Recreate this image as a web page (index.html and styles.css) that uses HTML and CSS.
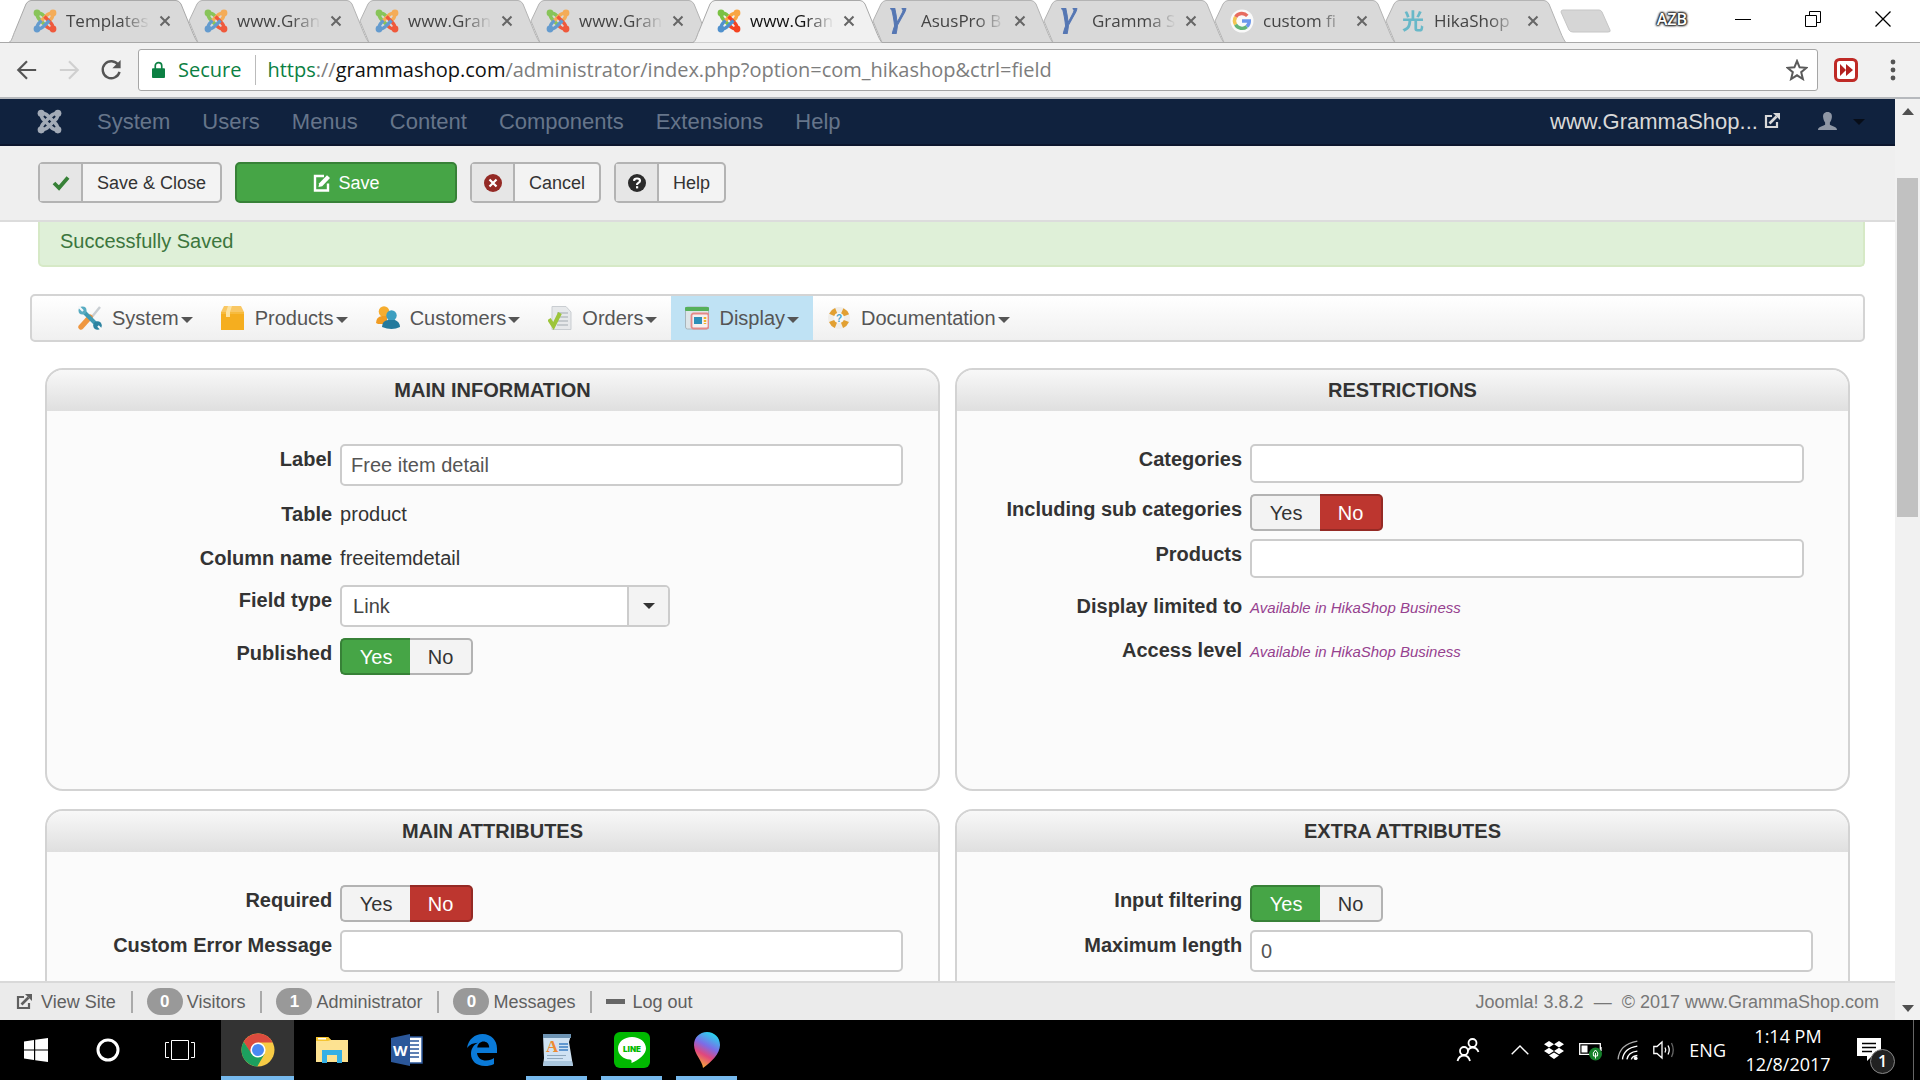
FILE: index.html
```html
<!DOCTYPE html>
<html lang="en">
<head>
  <meta charset="UTF-8">
  <meta name="viewport" content="width=device-width, initial-scale=1.0">
  <title>www.GrammaShop.com - Administration</title>
  <link rel="stylesheet" href="styles.css">
</head>
<body>
  <!-- shared icons -->
  <svg class="defs" aria-hidden="true">
    <defs>
      <symbol id="tab-full" viewBox="0 0 190 43" preserveAspectRatio="none">
        <path d="M0 42.5 C3 41 4 35 6 31 L17 4 Q19 .5 22 .5 H167 Q170 .5 172 4 L183 31 Q187 41 189 42.5" stroke="#a9a9a9"/>
      </symbol>
      <symbol id="tab-cut" viewBox="0 0 190 43" preserveAspectRatio="none">
        <path d="M18 42.5 L9 21 L17 4 Q19 .5 22 .5 H167 Q170 .5 172 4 L183 31 Q187 41 189 42.5" stroke="#b4b4b4"/>
      </symbol>
      <g id="hook">
        <circle cx="4" cy="4" r="3.4" fill="currentColor"/>
        <path d="M4 4 Q4 8.500 7 11 L12.500 16.500 M4 4 Q8.500 4 10.500 6.500 L12.500 8.500" fill="none" stroke="currentColor" stroke-width="3.400"/>
      </g>
      <symbol id="joomla" viewBox="0 0 24 24">
        <use href="#hook" color="#7ac143"/>
        <use href="#hook" color="#f9a541" transform="rotate(90 12 12)"/>
        <use href="#hook" color="#f44321" transform="rotate(180 12 12)"/>
        <use href="#hook" color="#5091cd" transform="rotate(270 12 12)"/>
      </symbol>
      <symbol id="joomla-mono" viewBox="0 0 24 24">
        <use href="#hook"/>
        <use href="#hook" transform="rotate(90 12 12)"/>
        <use href="#hook" transform="rotate(180 12 12)"/>
        <use href="#hook" transform="rotate(270 12 12)"/>
      </symbol>
      <symbol id="gamma" viewBox="0 0 24 24">
        <text x="2" y="17" font-family="Liberation Serif, serif" font-style="italic" font-size="38" fill="#3f66ad" stroke="#3f66ad">γ</text>
      </symbol>
      <symbol id="x" viewBox="0 0 12 12">
        <path d="M1.500 1.500 L10.500 10.500 M10.500 1.500 L1.500 10.500" stroke="currentColor" stroke-width="2"/>
      </symbol>
      <symbol id="external" viewBox="0 0 16 16">
        <path d="M8 3 H2 V14 H13 V9" fill="none" stroke="currentColor" stroke-width="2.200"/>
        <path d="M5.500 10.500 L12.500 3.500" stroke="currentColor" stroke-width="2.600"/>
        <path d="M9 0 H16 V7 Z" fill="currentColor"/>
      </symbol>
      <symbol id="caret" viewBox="0 0 12 6"><path d="M0 0 H12 L6 6 Z" fill="currentColor"/></symbol>
    </defs>
  </svg>

  <div class="browser">
    <div class="tab-strip">
      <div class="tab"><svg class="tab-shape"><use href="#tab-full"/></svg><svg class="favicon"><use href="#joomla"/></svg><span class="tab-title">Templates</span><button class="tab-close" aria-label="Close tab"><svg><use href="#x"/></svg></button></div>
      <div class="tab"><svg class="tab-shape"><use href="#tab-cut"/></svg><svg class="favicon"><use href="#joomla"/></svg><span class="tab-title">www.Gran</span><button class="tab-close" aria-label="Close tab"><svg><use href="#x"/></svg></button></div>
      <div class="tab"><svg class="tab-shape"><use href="#tab-cut"/></svg><svg class="favicon"><use href="#joomla"/></svg><span class="tab-title">www.Gran</span><button class="tab-close" aria-label="Close tab"><svg><use href="#x"/></svg></button></div>
      <div class="tab"><svg class="tab-shape"><use href="#tab-cut"/></svg><svg class="favicon"><use href="#joomla"/></svg><span class="tab-title">www.Gran</span><button class="tab-close" aria-label="Close tab"><svg><use href="#x"/></svg></button></div>
      <div class="tab active"><svg class="tab-shape"><use href="#tab-full"/></svg><svg class="favicon"><use href="#joomla"/></svg><span class="tab-title">www.Gran</span><button class="tab-close" aria-label="Close tab"><svg><use href="#x"/></svg></button></div>
      <div class="tab"><svg class="tab-shape"><use href="#tab-cut"/></svg><svg class="favicon"><use href="#gamma"/></svg><span class="tab-title">AsusPro B</span><button class="tab-close" aria-label="Close tab"><svg><use href="#x"/></svg></button></div>
      <div class="tab"><svg class="tab-shape"><use href="#tab-cut"/></svg><svg class="favicon"><use href="#gamma"/></svg><span class="tab-title">Gramma S</span><button class="tab-close" aria-label="Close tab"><svg><use href="#x"/></svg></button></div>
      <div class="tab">
        <svg class="tab-shape"><use href="#tab-cut"/></svg>
        <svg class="favicon" viewBox="0 0 24 24">
          <circle cx="12" cy="12" r="11.500" fill="#fff"/>
          <g fill="none" stroke-width="3.400">
            <path d="M5.600 8 A7.400 7.400 0 0 1 17.300 6.800" stroke="#ea5a4c"/>
            <path d="M5.600 15.700 A7.400 7.400 0 0 1 5.600 8" stroke="#f7c33c"/>
            <path d="M16.800 17.600 A7.400 7.400 0 0 1 5.600 15.700" stroke="#4fae66"/>
            <path d="M12 12 H19.300 A7.400 7.400 0 0 1 16.800 17.600" stroke="#5a8df0"/>
          </g>
        </svg>
        <span class="tab-title">custom fi</span><button class="tab-close" aria-label="Close tab"><svg><use href="#x"/></svg></button>
      </div>
      <div class="tab">
        <svg class="tab-shape"><use href="#tab-cut"/></svg>
        <svg class="favicon" viewBox="0 0 24 24"><text x="1" y="20" font-family="Noto Sans CJK JP, sans-serif" font-weight="bold" font-size="22" fill="#55b3c6">光</text></svg>
        <span class="tab-title">HikaShop</span><button class="tab-close" aria-label="Close tab"><svg><use href="#x"/></svg></button>
      </div>
      <button class="new-tab" aria-label="New tab"><svg viewBox="0 0 52 26"><path d="M3 2 H39 Q41 2 42 4 L50 22 Q51 24 48 24 H13 Q10 24 9 22 L1 4 Q1 2 3 2 Z" fill="#d6d6d6" stroke="#c6c6c6"/></svg></button>
      <div class="window-controls">
        <span class="profile">AZB</span>
        <button aria-label="Minimize"><svg viewBox="0 0 16 16"><path d="M0 8.500 H16" stroke="#000"/></svg></button>
        <button aria-label="Restore"><svg viewBox="0 0 16 16"><path d="M.5 4.500 H11.500 V15.500 H.5 Z M4.500 4 V.5 H15.500 V11.500 H12" fill="none" stroke="#000"/></svg></button>
        <button aria-label="Close"><svg viewBox="0 0 16 16"><path d="M.5 .5 L15.500 15.500 M15.500 .5 L.5 15.500" stroke="#000" stroke-width="1.300"/></svg></button>
      </div>
    </div>

    <div class="toolbar">
      <button class="tool" aria-label="Back"><svg viewBox="0 0 24 24"><path d="M22 12 H3 M12 2.500 L2.500 12 L12 21.500" fill="none" stroke="#555" stroke-width="2.400"/></svg></button>
      <button class="tool" aria-label="Forward"><svg viewBox="0 0 24 24"><path d="M2 12 H21 M12 2.500 L21.500 12 L12 21.500" fill="none" stroke="#d0d0d0" stroke-width="2.400"/></svg></button>
      <button class="tool" aria-label="Reload"><svg viewBox="0 0 24 24"><path d="M20 6.500 A9.300 9.300 0 1 0 21.300 14" fill="none" stroke="#555" stroke-width="2.600"/><path d="M22.500 1 V10 H13.500 Z" fill="#555"/></svg></button>
      <div class="address">
        <svg class="lock" viewBox="0 0 14 18"><path d="M1 7 H13 Q14 7 14 8 V16.500 Q14 17.500 13 17.500 H1 Q0 17.500 0 16.500 V8 Q0 7 1 7 Z" fill="#0b8043"/><path d="M3.500 8 V4.500 A3.500 3.500 0 0 1 10.500 4.500 V8" fill="none" stroke="#0b8043" stroke-width="1.800"/></svg>
        <span class="secure">Secure</span>
        <span class="url"><span class="scheme">https</span>://<b>grammashop.com</b>/administrator/index.php?option=com_hikashop&amp;ctrl=field</span>
        <svg class="star" viewBox="0 0 22 22"><path d="M11 2 L13.600 8.300 L20.500 8.800 L15.200 13.200 L16.900 20 L11 16.300 L5.100 20 L6.800 13.200 L1.500 8.800 L8.400 8.300 Z" fill="none" stroke="#5a5a5a" stroke-width="2"/></svg>
      </div>
      <button class="extension" aria-label="Extension"><svg viewBox="0 0 24 24"><rect x="1.500" y="1.500" width="21" height="21" rx="4" fill="#fff" stroke="#bf2a26" stroke-width="3"/><path d="M6 6 L12 12 L6 18 Z M12 6 L19 12 L12 18 Z" fill="#b3211f"/></svg></button>
      <button class="menu-dots" aria-label="Menu"><svg viewBox="0 0 6 22"><circle cx="3" cy="3" r="2.400"/><circle cx="3" cy="11" r="2.400"/><circle cx="3" cy="19" r="2.400"/></svg></button>
    </div>
  </div>

  <div class="viewport">
    <div class="page">
      <nav class="navbar">
        <a class="brand" href="#" aria-label="Joomla"><svg><use href="#joomla-mono"/></svg></a>
        <a href="#">System</a>
        <a href="#">Users</a>
        <a href="#">Menus</a>
        <a href="#">Content</a>
        <a href="#">Components</a>
        <a href="#">Extensions</a>
        <a href="#">Help</a>
        <a class="site-link" href="#">www.GrammaShop... <svg><use href="#external"/></svg></a>
        <a class="user" href="#" aria-label="User menu">
          <svg class="user-icon" viewBox="0 0 20 20"><path d="M10 0 C13.500 0 15 2.500 14.600 5.500 C14.400 8 13.500 9.500 12.500 11 V13.500 C15 15 20 15.500 20 19 H0 C0 15.500 5 15 7.500 13.500 V11 C6.500 9.500 5.600 8 5.400 5.500 C5 2.500 6.500 0 10 0 Z" fill="#8f97a5"/></svg>
          <svg class="caret"><use href="#caret"/></svg>
        </a>
      </nav>

      <div class="subhead">
        <button class="btn">
          <span class="btn-icon"><svg viewBox="0 0 18 18"><path d="M2 9 L7 14 L16 3.500" fill="none" stroke="#378137" stroke-width="3.800"/></svg></span>
          <span class="btn-text">Save &amp; Close</span>
        </button>
        <button class="btn btn-success">
          <svg viewBox="0 0 18 18"><path d="M11 2 H2 V16.500 H15 V9.500" fill="none" stroke="#fff" stroke-width="2.400"/><path d="M5.500 13 L6.200 9.200 L14 1.200 L17 4 L9.200 12.200 Z" fill="#fff"/></svg>
          Save
        </button>
        <button class="btn">
          <span class="btn-icon"><svg viewBox="0 0 18 18"><circle cx="9" cy="9" r="9" fill="#942a25"/><path d="M5.500 5.500 L12.500 12.500 M12.500 5.500 L5.500 12.500" stroke="#fff" stroke-width="2.200"/></svg></span>
          <span class="btn-text">Cancel</span>
        </button>
        <button class="btn">
          <span class="btn-icon"><svg viewBox="0 0 18 18"><circle cx="9" cy="9" r="9" fill="#2b2b2b"/><path d="M6 6.800 Q6.200 4.500 9 4.500 Q12 4.500 12 6.800 Q12 8.200 10.200 9 Q9 9.500 9 11" fill="none" stroke="#fff" stroke-width="2.200"/><rect x="8" y="12.200" width="2.200" height="2.200" fill="#fff"/></svg></span>
          <span class="btn-text">Help</span>
        </button>
      </div>

      <main class="content">
        <div class="alert">Successfully Saved</div>

        <div class="hika-menu">
          <a href="#">
            <svg viewBox="0 0 24 24"><path d="M22 1 L13 12" stroke="#c9ced2" stroke-width="2.400"/><path d="M12 11 L3 21" stroke="#ef9740" stroke-width="5.400" stroke-linecap="round"/><path d="M5 5 L19 19" stroke="#3f9ab3" stroke-width="4"/><circle cx="4.500" cy="4.500" r="4" fill="#58acc2"/><circle cx="19.500" cy="19.500" r="4.300" fill="#2c83a0"/><path d="M0 0 L5 5 M24 24 L20 20" stroke="#f5f8f9" stroke-width="2.200"/></svg>
            System<svg class="caret"><use href="#caret"/></svg>
          </a>
          <a href="#">
            <svg viewBox="0 0 24 24"><path d="M3 0 H20 L23 6 H0 Z" fill="#f9c763"/><rect y="6" width="23" height="18" fill="#f5ae1f"/><path d="M0 6 H23 V8 H0 Z" fill="#f7bb3d"/><path d="M7 0 H11 L9 6 V11 H5 V6 Z" fill="#fce2a0"/></svg>
            Products<svg class="caret"><use href="#caret"/></svg>
          </a>
          <a href="#">
            <svg viewBox="0 0 24 24"><circle cx="8" cy="5.500" r="5.300" fill="#f6ad2f"/><path d="M0 17 Q0 11 6 10 H11 V18 H2 Z" fill="#f19c22"/><circle cx="15.500" cy="9.500" r="5.200" fill="#3d9fc0"/><path d="M6 21 Q6 15 12 14 H19 Q24 16 24 21 Q16 25 6 21 Z" fill="#247a9d"/></svg>
            Customers<svg class="caret"><use href="#caret"/></svg>
          </a>
          <a href="#">
            <svg viewBox="0 0 24 24"><path d="M4 .5 H18 L23 6 V23.500 H4 Z" fill="#e6e8ea" stroke="#c9cdd1"/><path d="M9 7 H20 M9 11 H20 M9 15 H20 M9 19 H20" stroke="#b9bec3" stroke-width="1.500"/><path d="M1 13 L5.500 20 L12 7" fill="none" stroke="#9cc53a" stroke-width="4"/></svg>
            Orders<svg class="caret"><use href="#caret"/></svg>
          </a>
          <a class="current" href="#">
            <svg viewBox="0 0 24 24"><rect x=".5" y="1" width="23" height="22" rx="2" fill="#dde5e8" stroke="#a8b4ba"/><rect x="0" y="1" width="24" height="4" rx="1" fill="#55b05a"/><rect x="6.500" y="7.500" width="17" height="15" rx="2" fill="#f6f0f0" stroke="#e48a88" stroke-width="1.800"/><rect x="9" y="11" width="8" height="7" fill="#2e8fb8"/><path d="M20 11 V18" stroke="#f0b429" stroke-width="2.500" stroke-dasharray="2 1"/></svg>
            Display<svg class="caret"><use href="#caret"/></svg>
          </a>
          <a href="#">
            <svg viewBox="0 0 24 24"><circle cx="12" cy="12" r="8" fill="none" stroke="#f0eeea" stroke-width="6"/><circle cx="12" cy="12" r="8" fill="none" stroke="#e2a032" stroke-width="5.500" stroke-dasharray="6.300 6.270" stroke-dashoffset="-3.100"/><text x="9" y="16" font-family="Liberation Sans, sans-serif" font-weight="bold" font-size="10" fill="#49a5cf">?</text></svg>
            Documentation<svg class="caret"><use href="#caret"/></svg>
          </a>
        </div>

        <form class="panels">
          <section class="panel">
            <h2>Main information</h2>
            <div class="row"><label for="label">Label</label><input id="label" class="text" type="text" value="Free item detail"></div>
            <div class="row row-text"><span class="name">Table</span><span>product</span></div>
            <div class="row row-text"><span class="name">Column name</span><span>freeitemdetail</span></div>
            <div class="row">
              <label for="field-type">Field type</label>
              <div class="select">
                <select id="field-type"><option>Link</option><option>Text</option></select>
                <span class="select-arrow"><svg viewBox="0 0 12 6"><use href="#caret"/></svg></span>
              </div>
            </div>
            <div class="row row-toggle" role="radiogroup" aria-labelledby="published">
              <span class="name" id="published">Published</span>
              <div class="toggle"><input type="radio" name="published" id="published-yes" checked><label class="yes" for="published-yes">Yes</label><input type="radio" name="published" id="published-no"><label class="no" for="published-no">No</label></div>
            </div>
          </section>

          <section class="panel">
            <h2>Restrictions</h2>
            <div class="row"><label for="categories">Categories</label><input id="categories" class="text picker" type="text"></div>
            <div class="row row-toggle" role="radiogroup" aria-labelledby="subcats">
              <span class="name" id="subcats">Including sub categories</span>
              <div class="toggle"><input type="radio" name="subcats" id="subcats-yes"><label class="yes" for="subcats-yes">Yes</label><input type="radio" name="subcats" id="subcats-no" checked><label class="no" for="subcats-no">No</label></div>
            </div>
            <div class="row"><label for="products">Products</label><input id="products" class="text picker" type="text"></div>
            <div class="row row-text"><span class="name">Display limited to</span><a href="#">Available in HikaShop Business</a></div>
            <div class="row row-text"><span class="name">Access level</span><a href="#">Available in HikaShop Business</a></div>
          </section>

          <section class="panel">
            <h2>Main attributes</h2>
            <div class="row row-toggle" role="radiogroup" aria-labelledby="required">
              <span class="name" id="required">Required</span>
              <div class="toggle"><input type="radio" name="required" id="required-yes"><label class="yes" for="required-yes">Yes</label><input type="radio" name="required" id="required-no" checked><label class="no" for="required-no">No</label></div>
            </div>
            <div class="row"><label for="error">Custom Error Message</label><input id="error" class="text" type="text"></div>
          </section>

          <section class="panel">
            <h2>Extra attributes</h2>
            <div class="row row-toggle" role="radiogroup" aria-labelledby="filtering">
              <span class="name" id="filtering">Input filtering</span>
              <div class="toggle"><input type="radio" name="filtering" id="filtering-yes" checked><label class="yes" for="filtering-yes">Yes</label><input type="radio" name="filtering" id="filtering-no"><label class="no" for="filtering-no">No</label></div>
            </div>
            <div class="row"><label for="maxlength">Maximum length</label><input id="maxlength" class="text" type="text" value="0"></div>
          </section>
        </form>
      </main>

      <footer class="status">
        <a class="status-item" href="#"><svg><use href="#external"/></svg>View Site</a>
        <span class="status-item"><span class="badge">0</span>Visitors</span>
        <span class="status-item"><span class="badge">1</span>Administrator</span>
        <a class="status-item" href="#"><span class="badge">0</span>Messages</a>
        <a class="status-item" href="#"><span class="minus"></span>Log out</a>
        <span class="version">Joomla! 3.8.2 &nbsp;—&nbsp; © 2017 www.GrammaShop.com</span>
      </footer>
    </div>

    <div class="scrollbar">
      <svg viewBox="0 0 14 8"><path d="M0 8 L7 0 L14 8 Z" fill="#505050"/></svg>
      <div class="track"><div class="thumb"></div></div>
      <svg viewBox="0 0 14 8"><path d="M0 0 H14 L7 8 Z" fill="#505050"/></svg>
    </div>
  </div>

  <div class="taskbar">
    <button class="start" aria-label="Start"><svg viewBox="0 0 24 24"><path d="M0 3.400 L10 2 V11.400 H0 Z M11.200 1.800 L24 0 V11.400 H11.200 Z M0 12.600 H10 V22 L0 20.600 Z M11.200 12.600 H24 V24 L11.200 22.200 Z" fill="#fff"/></svg></button>
    <button class="start" aria-label="Cortana"><svg viewBox="0 0 24 24"><circle cx="12" cy="12" r="10" fill="none" stroke="#fff" stroke-width="3"/></svg></button>
    <button class="start" aria-label="Task view"><svg class="wide" viewBox="0 0 30 24"><path d="M6.500 2.500 H23.500 V21.500 H6.500 Z M4 4.500 H.5 V19.500 H4 M26 4.500 H29.500 V19.500 H26" fill="none" stroke="#fff"/></svg></button>
    <div class="apps">
      <button class="app current" aria-label="Chrome">
        <svg viewBox="0 0 36 36"><circle cx="18" cy="18" r="16.500" fill="#f7cb45"/><path d="M18 10.500 H32.600 A16.500 16.500 0 0 0 3.700 9.700 L11 22 Z" fill="#dc4b3e"/><path d="M3.700 9.700 A16.500 16.500 0 0 0 17.300 34.500 L24.500 22 L11.500 21.700 Z" fill="#1da05f"/><circle cx="18" cy="18" r="7.600" fill="#fff"/><circle cx="18" cy="18" r="6" fill="#4a89f3"/></svg>
      </button>
      <button class="app" aria-label="File Explorer">
        <svg viewBox="0 0 36 36"><path d="M2 5 H14 L17 8 H34 V30 H2 Z" fill="#fde291"/><path d="M2 5 H14 L17 8 L14 9 H2 Z" fill="#f5c430"/><rect x="4" y="6" width="8" height="1.500" fill="#fff"/><path d="M8 18 H28 V31 H23 V23 H13 V31 H8 Z" fill="#35b0e5"/></svg>
      </button>
      <button class="app" aria-label="Word">
        <svg viewBox="0 0 36 36"><rect x="20" y="5" width="13" height="26" fill="#fff" stroke="#2b579a" stroke-width="1.500"/><path d="M21 9 H30 M21 13 H30 M21 17 H30 M21 21 H30 M21 25 H30" stroke="#2b579a" stroke-width="1.600"/><path d="M2 6 L21 2 V34 L2 30 Z" fill="#2b579a"/><text x="4" y="24" font-family="Open Sans, sans-serif" font-weight="bold" font-size="15" fill="#fff">W</text></svg>
      </button>
      <button class="app" aria-label="Edge">
        <svg viewBox="0 0 36 36"><path d="M3 16 C4.500 7 11 2 18.500 2 C27.500 2 33 8.500 33 16.500 V21 H13 C13.500 26 17.500 28.500 22 28.500 C25.500 28.500 28 27.500 30 26 V32 C27.500 33.500 24 34 21 34 C12.500 34 7 29 7 22 C7 16.500 10 12.500 14 10.800 C9.500 11 5.500 12.500 3 16 Z M13.200 15.500 H25.200 C25.200 11.500 22.500 9.500 19.500 9.500 C16.500 9.500 13.800 11.800 13.200 15.500 Z" fill="#0a7ad8" fill-rule="evenodd"/></svg>
      </button>
      <button class="app running" aria-label="WordPad">
        <svg viewBox="0 0 36 36"><path d="M4 3 H32 L30 10 L34 34 H4 L5 26 Z" fill="#cfe2f3"/><path d="M4 2 H32 V6 H4 Z" fill="#6d93b3"/><path d="M5 29 H33 L34 34 H4 Z" fill="#a9c6de"/><path d="M20 12 H29 M20 15 H29 M20 18 H29" stroke="#3d7fc4" stroke-width="1.500"/><path d="M8 23.500 H27 M8 26.500 H24" stroke="#8fa8bd"/><text x="7" y="20" font-family="Liberation Serif, serif" font-weight="bold" font-size="17" fill="#ee8b35">A</text></svg>
      </button>
      <button class="app running" aria-label="LINE">
        <svg viewBox="0 0 36 36"><rect width="36" height="36" rx="6" fill="#00b900"/><path d="M18 5 C26 5 32 10 32 16.500 C32 22 25 28 17.500 31 C17.500 29 18 28 16 27.500 C9 27 4 22.500 4 16.500 C4 10 10 5 18 5 Z" fill="#fff"/><text x="18" y="20" text-anchor="middle" font-family="Inter, sans-serif" font-weight="900" font-size="8" fill="#00b900">LINE</text></svg>
      </button>
      <button class="app running" aria-label="Paint 3D">
        <svg viewBox="0 0 36 36">
          <defs><linearGradient id="drop" x1=".7" y1="0" x2=".3" y2="1"><stop offset="0" stop-color="#22dcf0"/><stop offset=".4" stop-color="#7d6ce6"/><stop offset=".65" stop-color="#e0477e"/><stop offset="1" stop-color="#f9b233"/></linearGradient></defs>
          <path d="M18 0 C25.500 0 31 5.500 31 13 C31 22 22 30 14 36 C13.500 29 5 22 5 13 C5 5.500 10.500 0 18 0 Z" fill="url(#drop)"/>
        </svg>
      </button>
    </div>
    <div class="tray">
      <svg class="people" viewBox="0 0 24 24"><g fill="none" stroke="#fff" stroke-width="1.800"><circle cx="16.500" cy="5" r="4"/><path d="M12 13 Q13 9.500 16.500 9.500 Q21 9.500 22.500 14"/><circle cx="8" cy="13" r="4"/><path d="M1.500 23 Q3 17.500 8 17.500 Q12.500 17.500 14 23"/></g></svg>
      <svg class="chevron" viewBox="0 0 18 10"><path d="M.7 9.300 L9 1 L17.300 9.300" fill="none" stroke="#fff" stroke-width="1.400"/></svg>
      <svg viewBox="0 0 22 22"><path d="M6 2 L11 5.200 L6 8.400 L1 5.200 Z M16 2 L21 5.200 L16 8.400 L11 5.200 Z M6 8.800 L11 12 L6 15.200 L1 12 Z M16 8.800 L21 12 L16 15.200 L11 12 Z M11 13.500 L16 16.600 L11 20 L6 16.600 Z" fill="#fff"/></svg>
      <svg class="battery" viewBox="0 0 24 22"><path d="M.7 4.700 H21.300 V15.300 H.7 Z M22 8 V12" fill="none" stroke="#fff" stroke-width="1.300"/><rect x="2.500" y="6.500" width="6" height="7" fill="#fff"/><circle cx="16.500" cy="15" r="6.500" fill="#15802b"/><path d="M16.500 11 Q20 14 18.500 17 H14.500 Q13 14 16.500 11 Z M16.500 14 V19.500" fill="none" stroke="#fff"/></svg>
      <svg viewBox="0 0 20 20"><g fill="none" stroke="#fff" stroke-width="1.200"><path d="M1 18.500 Q2 5 18.500 2" stroke="#aaa"/><path d="M5 18.500 Q6 8.500 18.500 6.500"/><path d="M9 18.500 Q10 12 18.500 11"/><path d="M13 18.500 Q14 15.500 18.500 15"/></g><circle cx="17" cy="17.500" r="1.700" fill="#fff"/></svg>
      <svg viewBox="0 0 22 20"><path d="M.8 6.500 H4 L9 2 V18 L4 13.500 H.8 Z M12 7.500 Q13.500 10 12 12.500 M15 5.500 Q17.500 10 15 14.500" fill="none" stroke="#fff" stroke-width="1.300"/><path d="M18.500 3 Q22 10 18.500 17" fill="none" stroke="#666" stroke-width="1.300"/></svg>
      <span class="lang">ENG</span>
      <div class="clock"><span>1:14 PM</span><span>12/8/2017</span></div>
      <button class="action-center" aria-label="1 new notification">
        <svg viewBox="0 0 24 24"><path d="M0 0 H24 V18 H15 L10 23 V18 H0 Z" fill="#fff"/><path d="M5 5.500 H19 M5 9.500 H19 M5 13.500 H15" stroke="#000" stroke-width="1.300"/></svg>
        <span class="count">1</span>
      </button>
    </div>
  </div>
</body>
</html>
```
FILE: styles.css
```css
* {
  box-sizing: border-box;
  margin: 0;
  padding: 0;
}

body {
  display: flex;
  flex-direction: column;
  height: 100vh;
  overflow: hidden;
  background-color: #fff;
  color: #333;
  font-family: "Liberation Sans", Arial, sans-serif;
  font-size: 20px;
  line-height: 30px;
}

a {
  color: inherit;
  text-decoration: none;
}

button {
  border: 0;
  background: none;
  font: inherit;
  color: inherit;
}

.defs {
  position: absolute;
  width: 0;
  height: 0;
}

/* browser window */

.browser {
  font-family: "Open Sans", "Noto Sans", sans-serif;
}

.tab-strip {
  display: flex;
  height: 43px;
  padding-left: 9px;
  border-bottom: 1px solid #a9a9a9;
}

.tab {
  position: relative;
  display: flex;
  align-items: center;
  width: 171px;
  padding: 0 0 1px 24px;
  color: #444;
}

.tab-shape {
  position: absolute;
  z-index: -1;
  top: 0;
  left: 0;
  width: 190px;
  height: 43px;
  fill: #d9d9d9;
}

.tab.active {
  z-index: 1;
  color: #111;
}

.active .tab-shape {
  fill: #f1f1f1;
}

.favicon {
  flex: none;
  width: 24px;
  height: 26px;
  opacity: 0.85;
}

.active .favicon {
  opacity: 1;
}

.tab-title {
  width: 84px;
  margin: 0 9px;
  font-size: 17px;
  white-space: nowrap;
  mask-image: linear-gradient(to right, #000 65%, transparent);
}

.tab-close {
  color: #666;
  line-height: 0;
}

.tab-close svg {
  width: 12px;
  height: 12px;
}

.new-tab {
  margin: 0 auto 0 12px;
  line-height: 0;
}

.new-tab svg {
  width: 52px;
  height: 26px;
}

.window-controls {
  display: flex;
  align-items: center;
  gap: 54px;
  padding: 0 29px 4px 0;
  line-height: 0;
}

.window-controls svg {
  width: 16px;
  height: 16px;
}

.profile {
  margin-right: -6px;
  color: #fff;
  font-size: 16px;
  font-weight: 600;
  text-shadow: 0 0 1px #222, 0 0 2px #222, 0 0 2px #222, 0 0 2px #222, 0 0 3px #222, 0 0 3px #222;
}

.toolbar {
  display: flex;
  align-items: center;
  height: 56px;
  padding: 0 24px 0 16px;
  border-bottom: 2px solid #b6b9bd;
  background-color: #f1f1f1;
}

.tool {
  width: 42px;
  text-align: left;
  line-height: 0;
}

.tool svg {
  width: 22px;
  height: 22px;
}

.address {
  display: flex;
  flex: 1;
  align-items: center;
  height: 42px;
  margin-right: 16px;
  margin-left: -4px;
  padding: 0 9px 0 13px;
  border: 1px solid #a6a6a6;
  border-radius: 3px;
  background-color: #fff;
}

.lock {
  width: 13px;
  height: 18px;
}

.secure {
  margin: 0 14px 0 13px;
  color: #0b8043;
}

.url {
  padding-left: 11px;
  border-left: 1px solid #bbb;
  color: #7d7d7d;
}

.url b {
  color: #111;
  font-weight: normal;
}

.scheme {
  color: #0b8043;
}

.star {
  width: 22px;
  height: 22px;
  margin-left: auto;
}

.extension svg {
  width: 24px;
  height: 24px;
}

.menu-dots {
  margin-left: 32px;
}

.extension,
.menu-dots {
  line-height: 0;
}

.menu-dots svg {
  width: 6px;
  height: 22px;
  fill: #555;
}

/* administrator page */

.viewport {
  display: flex;
  flex: 1;
  min-height: 0;
}

.page {
  display: flex;
  flex: 1;
  flex-direction: column;
  min-width: 0;
}

.navbar {
  display: flex;
  align-items: center;
  gap: 32px;
  height: 47px;
  padding: 0 30px 0 37px;
  border-bottom: 2px solid #0c162e;
  background-color: #10223e;
  color: #66758a;
  font-size: 22px;
}

.brand {
  height: 25px;
  margin-right: 3px;
  color: #a3abb7;
  line-height: 0;
}

.brand svg {
  width: 25px;
  height: 25px;
}

.site-link {
  margin-left: auto;
  color: #d9d9d9;
}

.site-link svg {
  width: 16px;
  height: 16px;
}

.user {
  display: flex;
  gap: 16px;
  align-items: center;
  margin-left: 6px;
  color: #070d18;
}

.user-icon {
  width: 19px;
  height: 19px;
}

.caret {
  width: 12px;
  height: 6px;
}

.subhead {
  display: flex;
  gap: 13px;
  padding: 16px 38px 17px;
  border-bottom: 2px solid #dcdcdc;
  background-color: #efefef;
}

.btn {
  display: flex;
  align-items: stretch;
  height: 41px;
  border: 2px solid #b3b3b3;
  border-radius: 5px;
  background-color: #f3f3f3;
  font-size: 18px;
  line-height: 38px;
}

.btn svg {
  width: 18px;
  height: 18px;
}

.btn-icon {
  display: flex;
  align-items: center;
  justify-content: center;
  width: 43px;
  border-right: 2px solid #b3b3b3;
  background-color: #e6e6e6;
}

.btn-text {
  padding: 0 14px;
}

.btn-success {
  align-items: center;
  justify-content: center;
  gap: 8px;
  width: 222px;
  border-color: #378137;
  background-color: #46a546;
  color: #fff;
}

.content {
  flex: 1;
  min-height: 0;
  overflow: hidden;
  padding: 0 30px;
}

.alert {
  height: 45px;
  margin: 0 0 27px 8px;
  padding: 4px 20px;
  border: 2px solid #d6e9c6;
  border-top: 0;
  border-radius: 0 0 5px 5px;
  background-color: #dff0d8;
  color: #3c763d;
}

.hika-menu {
  display: flex;
  height: 48px;
  margin-bottom: 26px;
  padding-left: 32px;
  border: 2px solid #d4d4d4;
  border-radius: 5px;
  background-image: linear-gradient(#fff, #f0f0f0);
  color: #555;
}

.hika-menu a {
  display: flex;
  align-items: center;
  padding: 0 14px;
}

.hika-menu svg {
  width: 24px;
  height: 24px;
  margin-right: 10px;
}

.hika-menu .caret {
  width: 12px;
  height: 6px;
  margin: 4px 0 0 2px;
}

.hika-menu .current {
  background-color: #bfe2f4;
}

.panels {
  display: grid;
  grid-template-columns: 1fr 1fr;
  gap: 18px 15px;
  padding: 0 15px;
}

.panel {
  min-height: 423px;
  overflow: hidden;
  border: 2px solid #d3d3d3;
  border-radius: 18px;
  background-color: #fbfbfb;
}

.panel h2 {
  margin-bottom: 33px;
  background-image: linear-gradient(#f8f8f8, #dfdfdf);
  font-size: 20px;
  line-height: 41px;
  text-align: center;
  text-transform: uppercase;
}

.row {
  display: grid;
  grid-template-columns: 32% 1fr 27px;
  gap: 8px;
  align-items: start;
  padding-bottom: 11px;
}

.row > label,
.name {
  font-weight: bold;
  text-align: right;
}

.row-text {
  height: 44px;
  padding: 2px 0 0;
}

.row-text a {
  color: #96418f;
  font-size: 15px;
  font-style: italic;
  line-height: 34px;
}

.row-toggle {
  padding-bottom: 8px;
}

.text {
  width: 100%;
  height: 42px;
  padding: 0 9px;
  border: 2px solid #ccc;
  border-radius: 5px;
  background-color: #fff;
  color: #555;
  font: inherit;
}

.picker {
  width: calc(100% - 9px);
  height: 39px;
}

.select {
  display: flex;
  width: 330px;
  height: 42px;
  overflow: hidden;
  border: 2px solid #ccc;
  border-radius: 5px;
  background-color: #fff;
}

.select select {
  flex: 1;
  padding-left: 11px;
  border: 0;
  background: none;
  color: #444;
  font: inherit;
  appearance: none;
}

.select-arrow {
  display: flex;
  align-items: center;
  justify-content: center;
  width: 41px;
  border-left: 2px solid #ccc;
  background-color: #f3f3f3;
}

.select-arrow svg {
  width: 12px;
  height: 6px;
}

.toggle {
  position: relative;
  display: flex;
}

.toggle input {
  position: absolute;
  opacity: 0;
}

.toggle label {
  width: 63px;
  height: 37px;
  border: 2px solid #b3b3b3;
  background-color: #f3f3f3;
  line-height: 34px;
  text-align: center;
}

.toggle .yes {
  width: 70px;
  border-right: 0;
  border-radius: 5px 0 0 5px;
}

.toggle .no {
  border-left: 0;
  border-radius: 0 5px 5px 0;
}

.toggle input:checked + .yes {
  border-color: #378137;
  background-color: #46a546;
  color: #fff;
}

.toggle input:checked + .no {
  border-color: #942a25;
  background-color: #bd362f;
  color: #fff;
}

.status {
  display: flex;
  align-items: center;
  height: 39px;
  padding: 0 16px;
  border-top: 2px solid #d9d9d9;
  background-color: #ebebeb;
  color: #5f5f5f;
  font-size: 18px;
  line-height: 22px;
}

.status-item {
  display: flex;
  align-items: center;
  padding-right: 15px;
}

.status-item + .status-item {
  padding-left: 14px;
  border-left: 2px solid #aaa;
}

.status-item svg {
  width: 16px;
  height: 16px;
  margin-right: 9px;
}

.badge {
  width: 36px;
  margin: -3px 4px -3px 0;
  border-radius: 14px;
  background-color: #999;
  color: #fff;
  font-size: 17px;
  font-weight: bold;
  line-height: 27px;
  text-align: center;
}

.minus {
  width: 19px;
  height: 5px;
  margin-right: 7px;
  background-color: #666;
}

.version {
  margin-left: auto;
  color: #777;
}

.scrollbar {
  display: flex;
  flex-direction: column;
  align-items: center;
  width: 25px;
  padding: 9px 0 8px;
  background-color: #f1f1f1;
}

.scrollbar svg {
  width: 12px;
  height: 7px;
}

.track {
  flex: 1;
  width: 21px;
  padding-top: 63px;
}

.thumb {
  height: 41%;
  background-color: #c1c1c1;
}

/* taskbar */

.taskbar {
  display: flex;
  height: 60px;
  background-color: #000;
  color: #fff;
  font-family: "Open Sans", "Noto Sans", sans-serif;
  font-size: 18px;
  line-height: 28px;
}

.start {
  width: 72px;
  line-height: 0;
}

.start svg {
  width: 24px;
  height: 24px;
}

.start .wide {
  width: 30px;
}

.apps {
  display: flex;
  gap: 14px;
  padding-left: 5px;
}

.app {
  width: 61px;
  padding-top: 4px;
  border-bottom: 4px solid transparent;
  line-height: 0;
}

.app svg {
  width: 36px;
  height: 36px;
}

.app.current {
  width: 73px;
  margin-right: -7px;
  background-color: #333;
}

.app.current,
.app.running {
  border-bottom-color: #76b9ed;
}

.tray {
  display: flex;
  align-items: center;
  gap: 14px;
  margin-left: auto;
  padding-right: 6px;
}

.tray svg {
  width: 22px;
  height: 22px;
}

.tray .people {
  width: 24px;
  height: 24px;
  margin-right: 17px;
}

.tray .chevron {
  width: 18px;
  height: 10px;
}

.tray .battery {
  width: 24px;
}

.clock {
  display: flex;
  flex-direction: column;
  width: 96px;
  text-align: center;
}

.action-center {
  position: relative;
  width: 64px;
  height: 100%;
  padding-right: 26px;
  border-right: 1px solid #666;
  line-height: 0;
}

.action-center svg {
  width: 24px;
  height: 24px;
}

.count {
  position: absolute;
  right: 18px;
  bottom: 6px;
  width: 25px;
  border: 1px solid #888;
  border-radius: 50%;
  background-color: #222;
  font-size: 16px;
  font-weight: 600;
  line-height: 23px;
}
```
